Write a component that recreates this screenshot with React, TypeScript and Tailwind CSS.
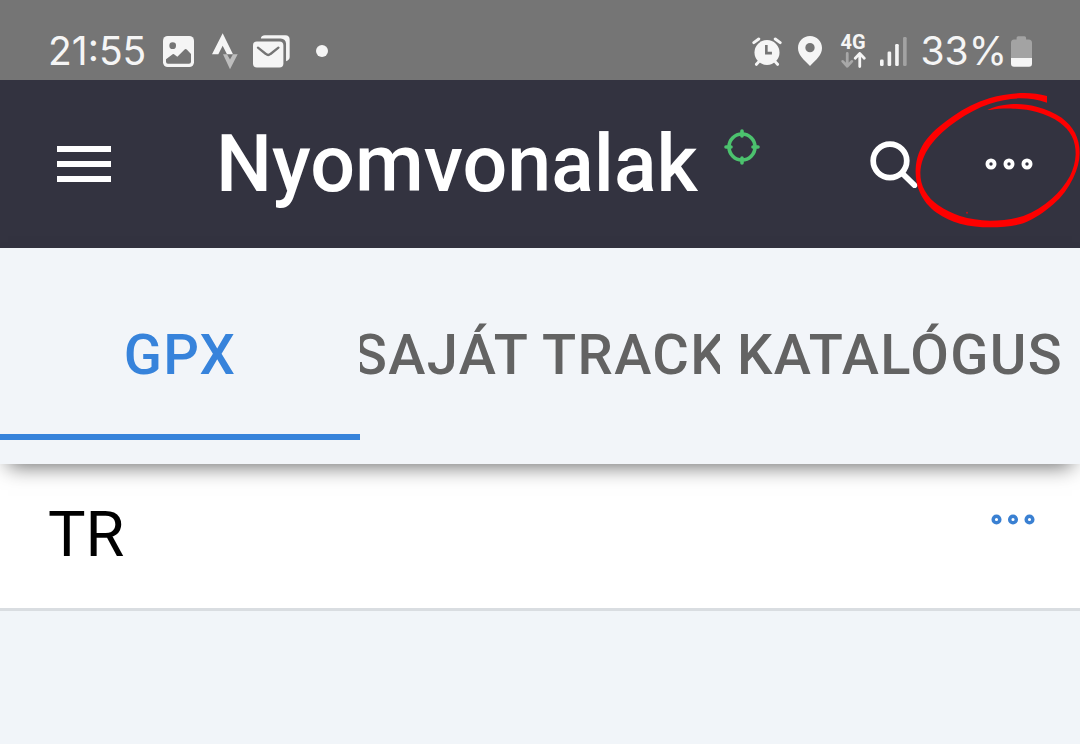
import { useState } from "react";
import { clsx } from "clsx";

const tabs = [
  { id: "gpx", label: "GPX" },
  { id: "own", label: "SAJÁT TRACK" },
  { id: "catalog", label: "KATALÓGUS" },
];

const tracks = [{ id: 1, name: "TR" }];

function Dots({ className }: { className?: string }) {
  return (
    <svg viewBox="0 0 48 12" fill="none" stroke="currentColor" strokeWidth="3.8" className={className} aria-hidden="true">
      <circle cx="6" cy="6" r="3.6" />
      <circle cx="24" cy="6" r="3.6" />
      <circle cx="42" cy="6" r="3.6" />
    </svg>
  );
}

function StatusBar() {
  return (
    <div className="flex h-20 items-end justify-between bg-[#757575] pr-12 pl-12 pb-1 font-['Inter',sans-serif] text-[39px] leading-[50px] text-[#f5f5f5]">
      <div className="flex items-center">
        <span>21:55</span>
        {/* gallery */}
        <svg viewBox="0 0 93 93" className="ml-[17px] h-[31px] w-[31px]" aria-hidden="true">
          <rect width="93" height="93" rx="14" fill="currentColor" />
          <circle cx="29" cy="29" r="10" fill="#757575" />
          <path d="M9 70 L29 55 Q32 53 35 56 L43 62 L64 41 Q68 37 72 41 L84 54 V77 Q84 83 78 83 H15 Q9 83 9 77 Z" fill="#757575" />
        </svg>
        {/* strava */}
        <svg viewBox="0 0 78 110" className="ml-[18px] h-[37px] w-[26px]" aria-hidden="true">
          <path d="M32 0 L63 63 H45 L32 38 L19 63 H0 Z" fill="currentColor" />
          <path d="M33 63 H45 L54 79 L63 63 H77 L54 108 Z" fill="#bdbdbd" />
        </svg>
        {/* mail */}
        <svg viewBox="0 0 112 99" className="ml-[15px] h-[33px] w-[37px]" aria-hidden="true">
          <path d="M24 8 Q26 0 36 0 H98 Q111 0 111 14 V66 Q111 75 100 79 V25 Q99 11 84 10 H24 Z" fill="currentColor" />
          <rect y="19" width="92" height="79" rx="12" fill="currentColor" />
          <path d="M15 38 L39 57 Q46 63 53 57 L77 38" fill="none" stroke="#757575" strokeWidth="7" strokeLinecap="round" />
        </svg>
        <span className="ml-[26px] h-3 w-3 rounded-full bg-[#f5f5f5]" />
      </div>

      <div className="flex items-center">
        {/* alarm */}
        <svg viewBox="0 0 90 88" className="h-[29px] w-[30px]" aria-hidden="true">
          <circle cx="45" cy="47" r="38" fill="currentColor" />
          <path d="M5 17 L20 6 M85 17 L70 6 M21 74 L13 83 M69 74 L77 83" stroke="currentColor" strokeWidth="9" strokeLinecap="round" />
          <path d="M43 24 V49 H60" fill="none" stroke="#757575" strokeWidth="8" />
        </svg>
        {/* location */}
        <svg viewBox="0 0 72 90" className="ml-[16px] h-[30px] w-[24px]" aria-hidden="true">
          <path fillRule="evenodd" d="M36 0 C56 0 72 16 72 36 C72 57 56 70 36 90 C16 70 0 57 0 36 C0 16 16 0 36 0 Z M36 21 A14 14 0 1 0 36 49 A14 14 0 1 0 36 21 Z" fill="currentColor" />
        </svg>
        <div className="ml-[18px] flex w-[27px] flex-col items-center font-['Roboto',sans-serif] text-[20px] leading-4 font-bold">
          <span>4G</span>
          <svg viewBox="0 0 72 46" fill="none" strokeWidth="8" strokeLinecap="round" strokeLinejoin="round" className="mt-[2px] h-[16px] w-[25px]" aria-hidden="true">
            <path d="M18 4 V40 M5 27 L18 41 L31 27" stroke="#a8a8a8" />
            <path d="M54 42 V5 M41 18 L54 4 L67 18" stroke="currentColor" />
          </svg>
        </div>
        {/* signal */}
        <svg viewBox="0 0 82 88" className="ml-[13px] h-[29px] w-[27px]" aria-hidden="true">
          <rect y="68" width="11" height="20" rx="4" fill="currentColor" />
          <rect x="23" y="44" width="11" height="44" rx="4" fill="currentColor" />
          <rect x="46" y="21" width="11" height="67" rx="4" fill="currentColor" />
          <rect x="70" width="11" height="88" rx="4" fill="#a3a3a3" />
        </svg>
        <span className="ml-[14px]">33%</span>
        {/* battery */}
        <svg viewBox="0 0 64 93" className="ml-1 h-[31px] w-[21px]" aria-hidden="true">
          <path d="M0 66 V20 Q0 11 9 10 H17 V5 Q17 0 22 0 H41 Q46 0 46 5 V10 H54 Q64 11 64 20 V66 Z" fill="#a3a3a3" />
          <path d="M0 66 H64 V84 Q64 93 55 93 H9 Q0 93 0 84 Z" fill="currentColor" />
        </svg>
      </div>
    </div>
  );
}

function Header() {
  return (
    <header className="relative flex h-[168px] items-center bg-[#333340] pr-[47px] pl-[57px] text-white">
      <button type="button" aria-label="Menü" className="flex w-[54px] flex-col gap-[9px]">
        <span className="h-[6px] bg-white" />
        <span className="h-[6px] bg-white" />
        <span className="h-[6px] bg-white" />
      </button>
      <h1 className="ml-[105px] text-[79px] leading-[94px] font-medium">Nyomvonalak</h1>
      <svg viewBox="0 0 36 36" fill="none" stroke="#4cc26e" strokeWidth="3.6" strokeLinecap="round" className="mb-[34px] ml-[26px] h-9 w-9" aria-hidden="true">
        <circle cx="18" cy="18" r="13" />
        <path d="M18 2 V7 M18 29 V34 M2 18 H7 M29 18 H34" />
      </svg>
      <button type="button" aria-label="Keresés" className="ml-auto">
        <svg viewBox="0 0 142 140" fill="none" stroke="currentColor" strokeWidth="17" className="h-[47px] w-[48px]" aria-hidden="true">
          <circle cx="59" cy="59" r="50" />
          <path d="M96 97 L132 132" strokeLinecap="round" />
        </svg>
      </button>
      <button type="button" aria-label="Továbbiak" className="ml-[67px]">
        <Dots className="h-[12px] w-[48px]" />
      </button>

      {/* hand-drawn marker around the menu */}
      <svg viewBox="0 0 720 504" fill="#fe0000" className="pointer-events-none absolute top-0 right-0 h-[168px] w-[240px]" aria-hidden="true">
        <path d="M621 48 C595 40 568 38 540 39 C508 41 478 45 450 54 C408 67 372 85 340 108 C308 130 282 150 260 178 C238 206 228 238 227 268 C226 292 230 317 240 338 C250 361 268 382 290 398 C312 413 335 424 360 431 C390 439 420 442 450 442 C485 442 518 439 550 430 C584 417 614 396 640 373 C666 350 686 323 700 293 C712 268 719 243 719 218 C719 196 714 176 705 158 C696 141 682 126 665 113 C642 98 617 87 590 80 C563 73 537 71 510 73 C486 75 462 80 442 90 L450 90 C473 86 496 85 520 86 C545 87 568 90 590 96 C616 103 640 114 660 128 C675 139 687 152 695 168 C704 185 707 204 707 223 C706 246 700 268 690 288 C676 314 657 337 635 356 C610 378 581 396 550 408 C518 418 484 422 450 422 C419 421 388 417 360 408 C336 400 315 390 295 376 C279 365 264 350 255 333 C245 316 241 298 241 278 C242 250 252 223 270 198 C291 169 319 144 350 123 C381 101 414 83 450 71 C479 61 509 56 540 55 C568 55 596 59 621 68 Z" />
        <circle cx="381" cy="398" r="3" opacity="0.7" />
      </svg>
    </header>
  );
}

export default function App() {
  const [active, setActive] = useState("gpx");

  return (
    <div className="flex min-h-screen flex-col bg-[#f1f5f9] font-['Roboto',sans-serif]">
      <StatusBar />
      <Header />

      <nav
        role="tablist"
        aria-label="Nyomvonalak"
        className="relative z-10 grid grid-cols-3 bg-[#f2f5f9] pb-6 shadow-[0_10px_20px_-8px_rgba(0,0,0,0.6)]"
      >
        {tabs.map(({ id, label }) => (
          <button
            key={id}
            type="button"
            role="tab"
            aria-selected={active === id}
            onClick={() => setActive(id)}
            className={clsx(
              "flex h-48 items-center justify-center overflow-hidden border-b-6 pt-[28px] text-[56px] leading-[72px] font-medium tracking-wide whitespace-nowrap",
              active === id ? "border-[#3783db] text-[#3783db]" : "border-transparent text-[#636363]"
            )}
          >
            {label}
          </button>
        ))}
      </nav>

      <ul>
        {tracks.map((track) => (
          <li key={track.id} className="flex items-start justify-between border-b-3 border-[#d9dde1] bg-white pr-[45px] pl-12">
            <span className="pt-[29px] pb-[31px] text-[63px] leading-[84px] text-black">{track.name}</span>
            <button type="button" aria-label={`${track.name} műveletek`} className="mt-[50px] text-[#3a80d2]">
              <Dots className="h-[11px] w-[44px]" />
            </button>
          </li>
        ))}
      </ul>
    </div>
  );
}
